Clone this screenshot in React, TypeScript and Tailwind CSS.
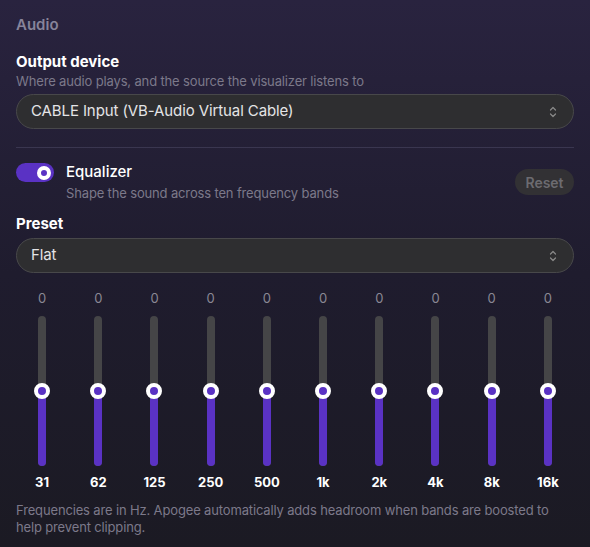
import { useState } from 'react';

const bands = ['31', '62', '125', '250', '500', '1k', '2k', '4k', '8k', '16k'];

function Chevrons() {
  return (
    <svg width="10" height="14" viewBox="0 0 10 14" fill="none" stroke="#8a8a8a" strokeWidth="1.2" strokeLinecap="round" strokeLinejoin="round">
      <path d="M2.5 5 L5 2.5 L7.5 5" />
      <path d="M2.5 9 L5 11.5 L7.5 9" />
    </svg>
  );
}

function Select({ value }: { value: string }) {
  return (
    <div className="flex h-[35px] items-center justify-between rounded-full border border-[#48484a] bg-[#2e2e30] pl-[14px] pr-[15px]">
      <span className="text-[15px] tracking-[-0.1px] text-[#e4e4e6]">{value}</span>
      <Chevrons />
    </div>
  );
}

function BandSlider({ label, gain }: { label: string; gain: number }) {
  // gain range -12..+12, 0 sits at the middle of the track
  const fill = ((gain + 12) / 24) * 100;
  return (
    <div className="flex flex-col items-center">
      <span className="text-[13px] leading-[18px] text-[#8a8894]">{gain}</span>
      <div className="relative mt-[9px] h-[150px] w-2 rounded-full bg-[#454547]">
        <div className="absolute bottom-0 left-0 w-2 rounded-full bg-[#5a32c4]" style={{ height: `${fill}%` }} />
        <div
          className="absolute left-1/2 h-4 w-4 -translate-x-1/2 translate-y-1/2 rounded-full border-[4.5px] border-white bg-[#5a32c4]"
          style={{ bottom: `${fill}%` }}
        />
      </div>
      <span className="mt-[7px] text-[13px] font-bold leading-[18px] text-white">{label}</span>
    </div>
  );
}

export default function App() {
  const [eqOn] = useState(true);

  return (
    <div
      className="h-[547px] w-[590px] overflow-hidden bg-gradient-to-b from-[#29233f] via-[#1f1c2e] to-[#1b1a23] px-4 pt-[15px]"
      style={{ fontFamily: 'Inter, "Noto Sans", sans-serif' }}
    >
      <div className="text-[15px] font-semibold leading-5 text-[#87849a]">Audio</div>

      <div className="mt-[17px] text-[15px] font-bold leading-5 text-white">Output device</div>
      <div className="text-[13px] leading-[18px] tracking-[-0.15px] text-[#7c798a]">Where audio plays, and the source the visualizer listens to</div>
      <div className="mt-[4px]">
        <Select value="CABLE Input (VB-Audio Virtual Cable)" />
      </div>

      <div className="mt-[18px] h-px bg-[#3a3650]" />

      <div className="mt-[14px] flex items-center justify-between">
        <div className="flex items-start gap-3">
          <div className={`mt-px flex h-[19px] w-[38px] items-center justify-end rounded-full px-[3px] ${eqOn ? 'bg-[#5a32c4]' : 'bg-[#454547]'}`}>
            <div className="h-[14px] w-[14px] rounded-full border-[4.5px] border-white bg-[#5a32c4]" />
          </div>
          <div>
            <div className="text-[15px] font-medium leading-5 text-white">Equalizer</div>
            <div className="mt-[2px] text-[13px] leading-[18px] tracking-[-0.15px] text-[#7c798a]">Shape the sound across ten frequency bands</div>
          </div>
        </div>
        <button className="h-[26px] w-[59px] rounded-full bg-[#323134] text-[14px] font-semibold text-[#6c6b70]">Reset</button>
      </div>

      <div className="mt-[12px] text-[15px] font-bold leading-5 text-white">Preset</div>
      <div className="mt-1">
        <Select value="Flat" />
      </div>

      <div className="mt-4 grid grid-cols-10 gap-1">
        {bands.map((b) => (
          <BandSlider key={b} label={b} gain={0} />
        ))}
      </div>

      <p className="mt-[11px] text-[13px] leading-[17px] tracking-[-0.15px] text-[#7c798a]">
        Frequencies are in Hz. Apogee automatically adds headroom when bands are boosted to help prevent clipping.
      </p>
    </div>
  );
}
